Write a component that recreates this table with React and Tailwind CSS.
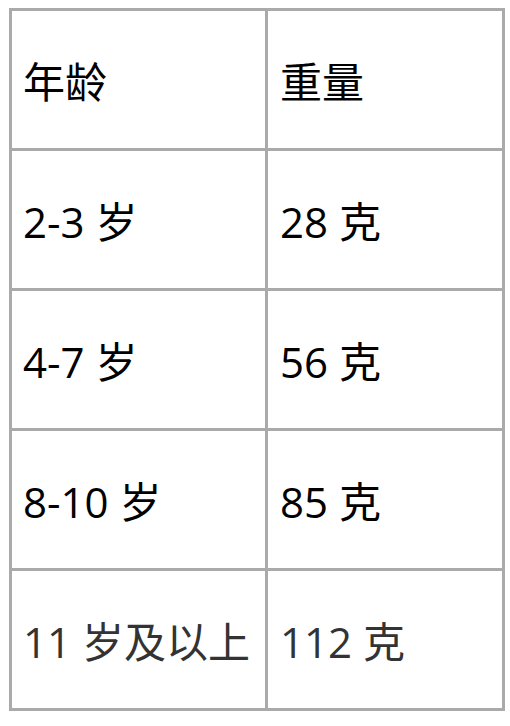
import React from "react";

const rows = [
  ["年龄", "重量", "text-black"],
  ["2-3 岁", "28 克", "text-black"],
  ["4-7 岁", "56 克", "text-black"],
  ["8-10 岁", "85 克", "text-black"],
  ["11 岁及以上", "112 克", "text-[#333333]"],
];

export default function App() {
  return (
    <div className="w-[510px] h-[726px] bg-white pt-[8px] pl-[9px]" style={{ fontFamily: '"Open Sans", "Noto Sans CJK SC", sans-serif' }}>
      <div className="grid grid-cols-[256px_237px] w-[496px] border-l-[3px] border-t-[3px] border-[#aaaaaa]">
        {rows.map(([a, b, c], i) => (
          <React.Fragment key={i}>
            <div className={`h-[140px] flex items-center pl-[11px] pt-[3px] border-r-[3px] border-b-[3px] border-[#aaaaaa] text-[42px] whitespace-nowrap ${c}`}>
              {a}
            </div>
            <div className={`h-[140px] flex items-center pl-[12px] pt-[3px] border-r-[3px] border-b-[3px] border-[#aaaaaa] text-[42px] whitespace-nowrap ${c}`}>
              {b}
            </div>
          </React.Fragment>
        ))}
      </div>
    </div>
  );
}
